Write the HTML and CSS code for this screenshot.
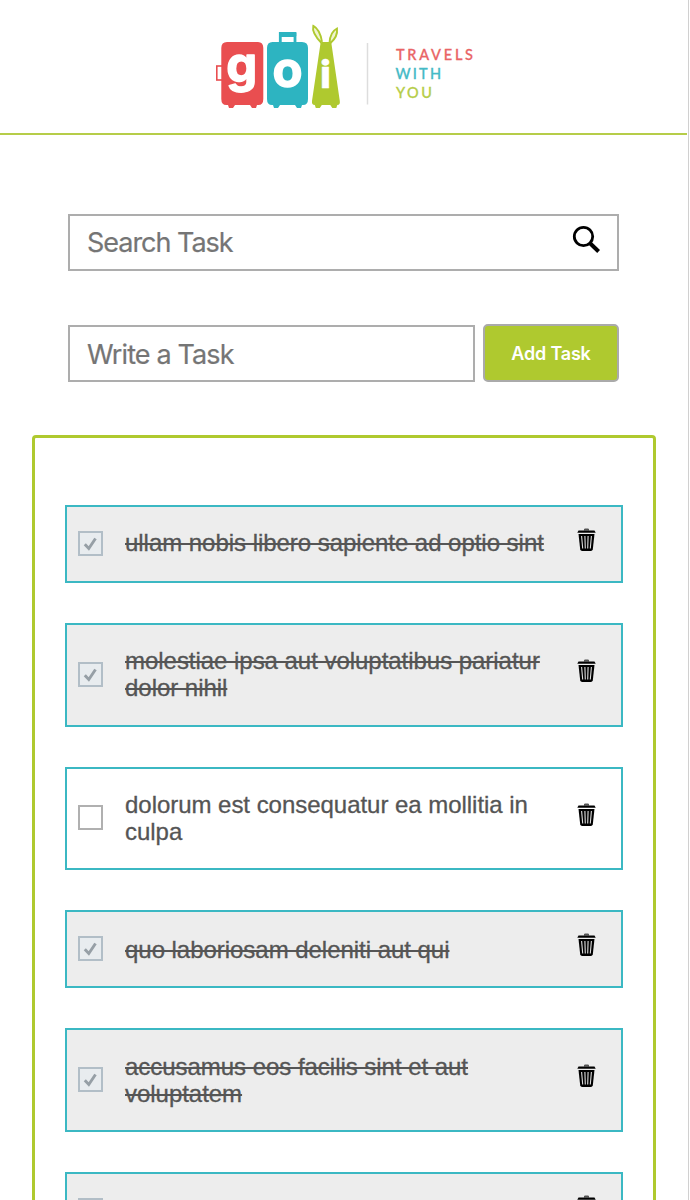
FILE: index.html
```html
<!DOCTYPE html>
<html lang="en">
<head>
<meta charset="utf-8">
<title>goi tasks</title>
<link rel="stylesheet" href="styles.css">
</head>
<body>
<svg class="symbols" aria-hidden="true">
  <symbol id="trash" viewBox="0 0 19 24">
    <path d="M7.500 2.500V1h4v1.500" fill="#555" stroke="#555" stroke-width="1"/>
    <path d="M1.500 2.600h16l1.200 2.200H.3z" fill="#000"/>
    <path d="M1.500 6h16l-1.700 15.200q-.3 1.800-2 1.800H5.200q-1.700 0-2-1.800z" fill="#000"/>
    <path d="M4.600 8l1.100 12.500M7.900 8l.4 12.500M11.100 8l-.4 12.500M14.400 8l-1.100 12.500" fill="none" stroke="#ddd" stroke-width="1.100"/>
  </symbol>
  <symbol id="check" viewBox="0 0 25 25"><path d="M6.800 13.200l4 4.300 6.700-10" fill="none" stroke="#969fa6" stroke-width="2.900"/></symbol>
</svg>
<div class="page">
  <header class="header">
    <svg class="logo" viewBox="0 0 270 90">
      <rect x="1.800" y="46" width="8" height="14" fill="none" stroke="#e94e50" stroke-width="1.600"/>
      <path d="M12 22h31q5.300 0 5.300 6v51q0 6-5 6h-1.300l-1 3h-4l-2-3H20l-2 3h-4l-1-3h-1.700q-5 0-5-6V28q0-6 5.700-6z" fill="#e94e50"/>
      <path d="M65.300 23V13.500H80V23" fill="none" stroke="#2db4c1" stroke-width="2.800"/>
      <rect x="64" y="12" width="17.300" height="5" rx="1.500" fill="#2db4c1"/>
      <path d="M57.500 22H87q6 0 6 6v51q0 6-5 6h-1l-1 3h-4l-2-3H65l-2 3h-4l-1-3h-1q-5 0-5-6V28q0-6 5.500-6z" fill="#2db4c1"/>
      <path d="M105.700 22h10.500l8.600 59q.6 4-2.500 4l-1 3h-4l-2-3h-8.500l-2 3h-4l-1-3q-3.300 0-2.800-4z" fill="#afc92f"/>
      <path d="M106.500 23Q96.500 13 98.300 5.800q6.700 3.500 8.700 16M114.500 23q.5-11 7.500-14.500 1 8-6.500 14.500" fill="#eff4cf" stroke="#afc92f" stroke-width="1.900"/>
      <text class="letter" text-anchor="middle" x="26.800" y="62">g</text>
      <text class="letter" text-anchor="middle" x="72.500" y="67">o</text>
      <text class="letter-i" text-anchor="middle" x="110.500" y="68">i</text>
      <path d="M152.500 23v61.500" stroke="#ddd" stroke-width="1.500"/>
      <text class="tagline red" x="181" y="40" textLength="77">TRAVELS</text>
      <text class="tagline teal" x="180.500" y="59" textLength="45.500">WITH</text>
      <text class="tagline green" x="181" y="78" textLength="36">YOU</text>
    </svg>
  </header>
  <main>
    <div class="field search"><span>Search Task</span>
      <svg class="search-icon" viewBox="0 0 30 30"><circle cx="11.500" cy="11.500" r="9.200" fill="none" stroke="#000" stroke-width="2.800"/><path d="M18.300 18.500l8.300 8" stroke="#000" stroke-width="4"/></svg>
    </div>
    <div class="add-row">
      <div class="field write"><span>Write a Task</span></div>
      <div class="add">Add Task</div>
    </div>
    <section class="list">
      <div class="task single first done"><span class="box"><svg viewBox="0 0 25 25"><use href="#check"/></svg></span><p>ullam nobis libero sapiente ad optio sint</p><svg class="trash"><use href="#trash"/></svg></div>
      <div class="task second done"><span class="box"><svg viewBox="0 0 25 25"><use href="#check"/></svg></span><p>molestiae ipsa aut voluptatibus pariatur<br>dolor nihil</p><svg class="trash"><use href="#trash"/></svg></div>
      <div class="task open"><span class="box"></span><p>dolorum est consequatur ea mollitia in<br>culpa</p><svg class="trash"><use href="#trash"/></svg></div>
      <div class="task single fourth done"><span class="box"><svg viewBox="0 0 25 25"><use href="#check"/></svg></span><p>quo laboriosam deleniti aut qui</p><svg class="trash"><use href="#trash"/></svg></div>
      <div class="task done"><span class="box"><svg viewBox="0 0 25 25"><use href="#check"/></svg></span><p>accusamus eos facilis sint et aut<br>voluptatem</p><svg class="trash"><use href="#trash"/></svg></div>
      <div class="task last done"><span class="box"></span><p></p><svg class="trash"><use href="#trash"/></svg></div>
    </section>
  </main>
</div>
</body>
</html>
```
FILE: styles.css
```css
* { box-sizing: border-box; }
html, body { margin: 0; height: 1200px; overflow: hidden; background: #fff; }
.symbols { display: none; }
.page { width: 689px; height: 1200px; overflow: hidden; border-right: 1px solid #d0d0d0; font-family: "Liberation Sans", Arial, sans-serif; }
.header { height: 135px; width: 687px; padding: 20px 0 0 215px; border-bottom: 2px solid #b6cd49; }
.logo { display: block; width: 270px; height: 90px; }
.letter { font: 700 49px Inter, sans-serif; fill: #fff; stroke: #fff; stroke-width: 1.4; stroke-linejoin: round; }
.letter-i { font: 900 38px Roboto, sans-serif; fill: #fff; stroke: #fff; stroke-width: .6; stroke-linejoin: round; }
.tagline { font: 500 14.5px Lato, sans-serif; stroke-width: .3; }
.red { fill: #e96466; stroke: #e96466; }
.teal { fill: #45bac6; stroke: #45bac6; }
.green { fill: #b6cd49; stroke: #b6cd49; }
.field { display: flex; align-items: center; justify-content: space-between; border: 2px solid #adadad; padding: 0 15px 0 17px; height: 57px; font: 27px Inter, sans-serif; letter-spacing: -1.03px; color: #757575; -webkit-text-stroke: .2px #757575; }
.search { margin: 79px 0 0 68px; width: 551px; }
.search-icon { width: 30px; height: 30px; margin-top: -5px; }
.add-row { display: flex; align-items: center; gap: 8px; margin: 53px 0 0 68px; height: 58px; }
.write { width: 407px; padding-top: 2px; letter-spacing: -.88px; }
.add { width: 136px; height: 58px; border: 2px solid #aaa; border-radius: 5px; background: #afc92f; color: #fff; display: flex; align-items: center; justify-content: center; font: 600 18px Inter, sans-serif; letter-spacing: -.2px; }
.list { margin: 53px 0 0 32px; width: 624px; height: 900px; border: 3px solid #afc92f; border-radius: 4px; padding: 67px 30px 0; display: flex; flex-direction: column; gap: 40px; }
.task { flex: none; display: flex; align-items: center; width: 558px; height: 104px; border: 2px solid #3bb8c3; padding: 0 25px 0 11px; color: #555; font-size: 24px; line-height: 27px; letter-spacing: -.035px; -webkit-text-stroke: .3px #555; }
.single { height: 78px; }
.open { height: 103px; }
.done { background: #ededed; }
.task p { margin: -1px 0 0 22px; flex: 1; white-space: nowrap; }
.first p { margin-top: -4px; }
.second p { margin-top: -3px; }
.fourth p { margin-top: 1px; }
.done p { text-decoration: line-through; text-decoration-thickness: 2px; }
.box { flex: none; width: 25px; height: 25px; margin-top: -2px; border: 2px solid #b0b0b0; }
.box svg { display: block; width: 25px; height: 25px; margin: -2px; }
.done .box { border-color: #b2bec7; background: #e8ecef; }
.trash { flex: none; width: 19px; height: 24px; margin-top: -8px; }
.last { height: 78px; }
```
